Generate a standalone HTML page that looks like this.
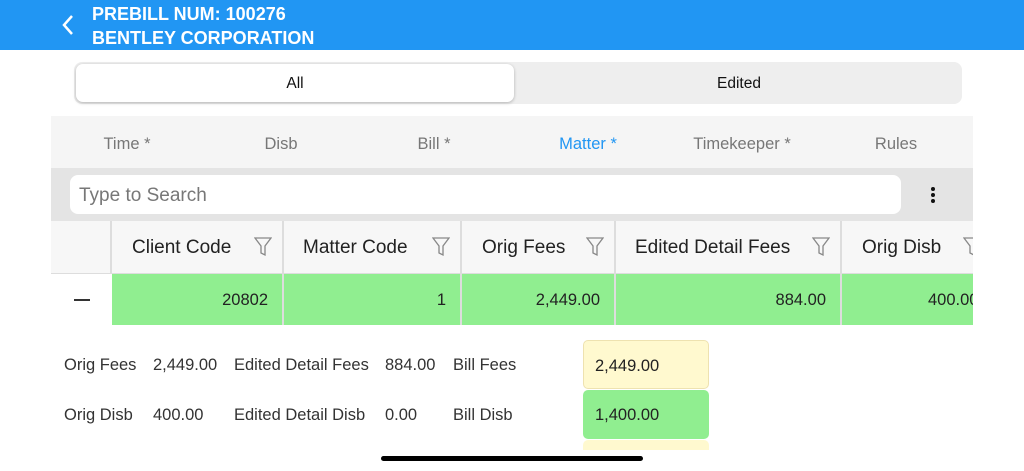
<!DOCTYPE html>
<html><head><style>
*{margin:0;padding:0;box-sizing:border-box}
body{width:1024px;height:471px;overflow:hidden;background:#fff;font-family:"Liberation Sans",sans-serif;position:relative;color:#222}
.a{position:absolute}
.hdr{left:0;top:0;width:1024px;height:50px;background:#2196f3;color:#fff;font-weight:bold;font-size:18px}
.tab{top:118px;height:52px;line-height:52px;font-size:16.5px;color:#777;text-align:center;width:150px}
.th{top:221px;height:52px;line-height:54px;font-size:19px;color:#222;background:#f7f7f7;border-right:2px solid #ddd}
.td{top:274px;height:51px;line-height:53px;font-size:16.5px;background:#90ee90;text-align:right;padding-right:14px;border-right:2px solid #ddd}
.lbl{font-size:16.5px;color:#333}
</style></head><body>
<div class="a hdr">
 <svg class="a" style="left:60px;top:14px" width="16" height="22" viewBox="0 0 16 22"><path d="M12 2 L4 11 L12 20" fill="none" stroke="#fff" stroke-width="2.5"/></svg>
 <div class="a" style="left:92px;top:4px">PREBILL NUM: 100276</div>
 <div class="a" style="left:92px;top:28px">BENTLEY CORPORATION</div>
</div>
<div class="a" style="left:74px;top:62px;width:888px;height:42px;background:#eee;border-radius:8px"></div>
<div class="a" style="left:76px;top:64px;width:438px;height:38px;background:#fff;border-radius:7px;box-shadow:0 1px 3px rgba(0,0,0,.25);text-align:center;line-height:40px;font-size:15.5px;color:#111">All</div>
<div class="a" style="left:518px;top:64px;width:442px;height:38px;text-align:center;line-height:40px;font-size:15.5px;color:#111">Edited</div>
<div class="a" style="left:51px;top:116px;width:922px;height:52px;background:#f5f5f5"></div>
<div class="a tab" style="left:52px">Time *</div>
<div class="a tab" style="left:206px">Disb</div>
<div class="a tab" style="left:359px">Bill *</div>
<div class="a tab" style="left:513px;color:#2196f3">Matter *</div>
<div class="a tab" style="left:667px">Timekeeper *</div>
<div class="a tab" style="left:821px">Rules</div>
<div class="a" style="left:51px;top:168px;width:922px;height:53px;background:#e4e4e4"></div>
<div class="a" style="left:70px;top:175px;width:831px;height:39px;background:#fff;border-radius:8px;padding-left:9px;line-height:41px;font-size:19px;color:#777">Type to Search</div>
<div class="a" style="left:931px;top:187px;width:4px;height:4px;border-radius:2px;background:#111;box-shadow:0 6px 0 #111,0 12px 0 #111"></div>
<div class="a" style="left:51px;top:221px;width:922px;height:53px;background:#f7f7f7;border-bottom:2px solid #ddd"></div>
<div class="a th" style="left:51px;width:61px"></div>
<div class="a th" style="left:112px;width:172px;padding-left:20px">Client Code</div>
<div class="a th" style="left:284px;width:178px;padding-left:19px">Matter Code</div>
<div class="a th" style="left:462px;width:154px;padding-left:20px">Orig Fees</div>
<div class="a th" style="left:616px;width:226px;padding-left:19px">Edited Detail Fees</div>
<div class="a th" style="left:842px;width:131px;padding-left:20px;overflow:hidden;border-right:0">Orig Disb</div>
<svg class="a" width="0" height="0"><defs><symbol id="fl" viewBox="0 0 18 20"><path d="M1 1 H17 L11 9 V18 L7 16 V9 Z" fill="none" stroke="#888" stroke-width="1.3"/></symbol></defs></svg>
<svg class="a" style="left:254px;top:237px" width="18" height="20"><use href="#fl"/></svg>
<svg class="a" style="left:432px;top:237px" width="18" height="20"><use href="#fl"/></svg>
<svg class="a" style="left:586px;top:237px" width="18" height="20"><use href="#fl"/></svg>
<svg class="a" style="left:812px;top:237px" width="18" height="20"><use href="#fl"/></svg>
<div class="a" style="left:963px;top:237px;width:10px;height:20px;overflow:hidden"><svg width="18" height="20"><use href="#fl"/></svg></div>
<div class="a" style="left:74px;top:299px;width:16px;height:1.5px;background:#333"></div>
<div class="a td" style="left:112px;width:172px">20802</div>
<div class="a td" style="left:284px;width:178px">1</div>
<div class="a td" style="left:462px;width:154px">2,449.00</div>
<div class="a td" style="left:616px;width:226px">884.00</div>
<div class="a td" style="left:842px;width:131px;border-right:0;padding-right:0;overflow:hidden;text-align:left;padding-left:86px">400.00</div>
<div class="a lbl" style="left:64px;top:356px">Orig Fees</div>
<div class="a lbl" style="left:153px;top:356px">2,449.00</div>
<div class="a lbl" style="left:234px;top:356px">Edited Detail Fees</div>
<div class="a lbl" style="left:385px;top:356px">884.00</div>
<div class="a lbl" style="left:453px;top:356px">Bill Fees</div>
<div class="a lbl" style="left:64px;top:406px">Orig Disb</div>
<div class="a lbl" style="left:153px;top:406px">400.00</div>
<div class="a lbl" style="left:234px;top:406px">Edited Detail Disb</div>
<div class="a lbl" style="left:385px;top:406px">0.00</div>
<div class="a lbl" style="left:453px;top:406px">Bill Disb</div>
<div class="a" style="left:583px;top:340px;width:126px;height:49px;background:#fff9cf;border:1px solid #eee2b0;border-radius:5px;padding-left:11px;line-height:50px;font-size:16.5px">2,449.00</div>
<div class="a" style="left:583px;top:390px;width:126px;height:49px;background:#90ee90;border-radius:5px;padding-left:12px;line-height:50px;font-size:16.5px">1,400.00</div>
<div class="a" style="left:583px;top:440px;width:126px;height:10px;background:#fff9cf;border-radius:5px 5px 0 0"></div>
<div class="a" style="left:381px;top:456px;width:262px;height:5px;background:#000;border-radius:3px"></div>
</body></html>
